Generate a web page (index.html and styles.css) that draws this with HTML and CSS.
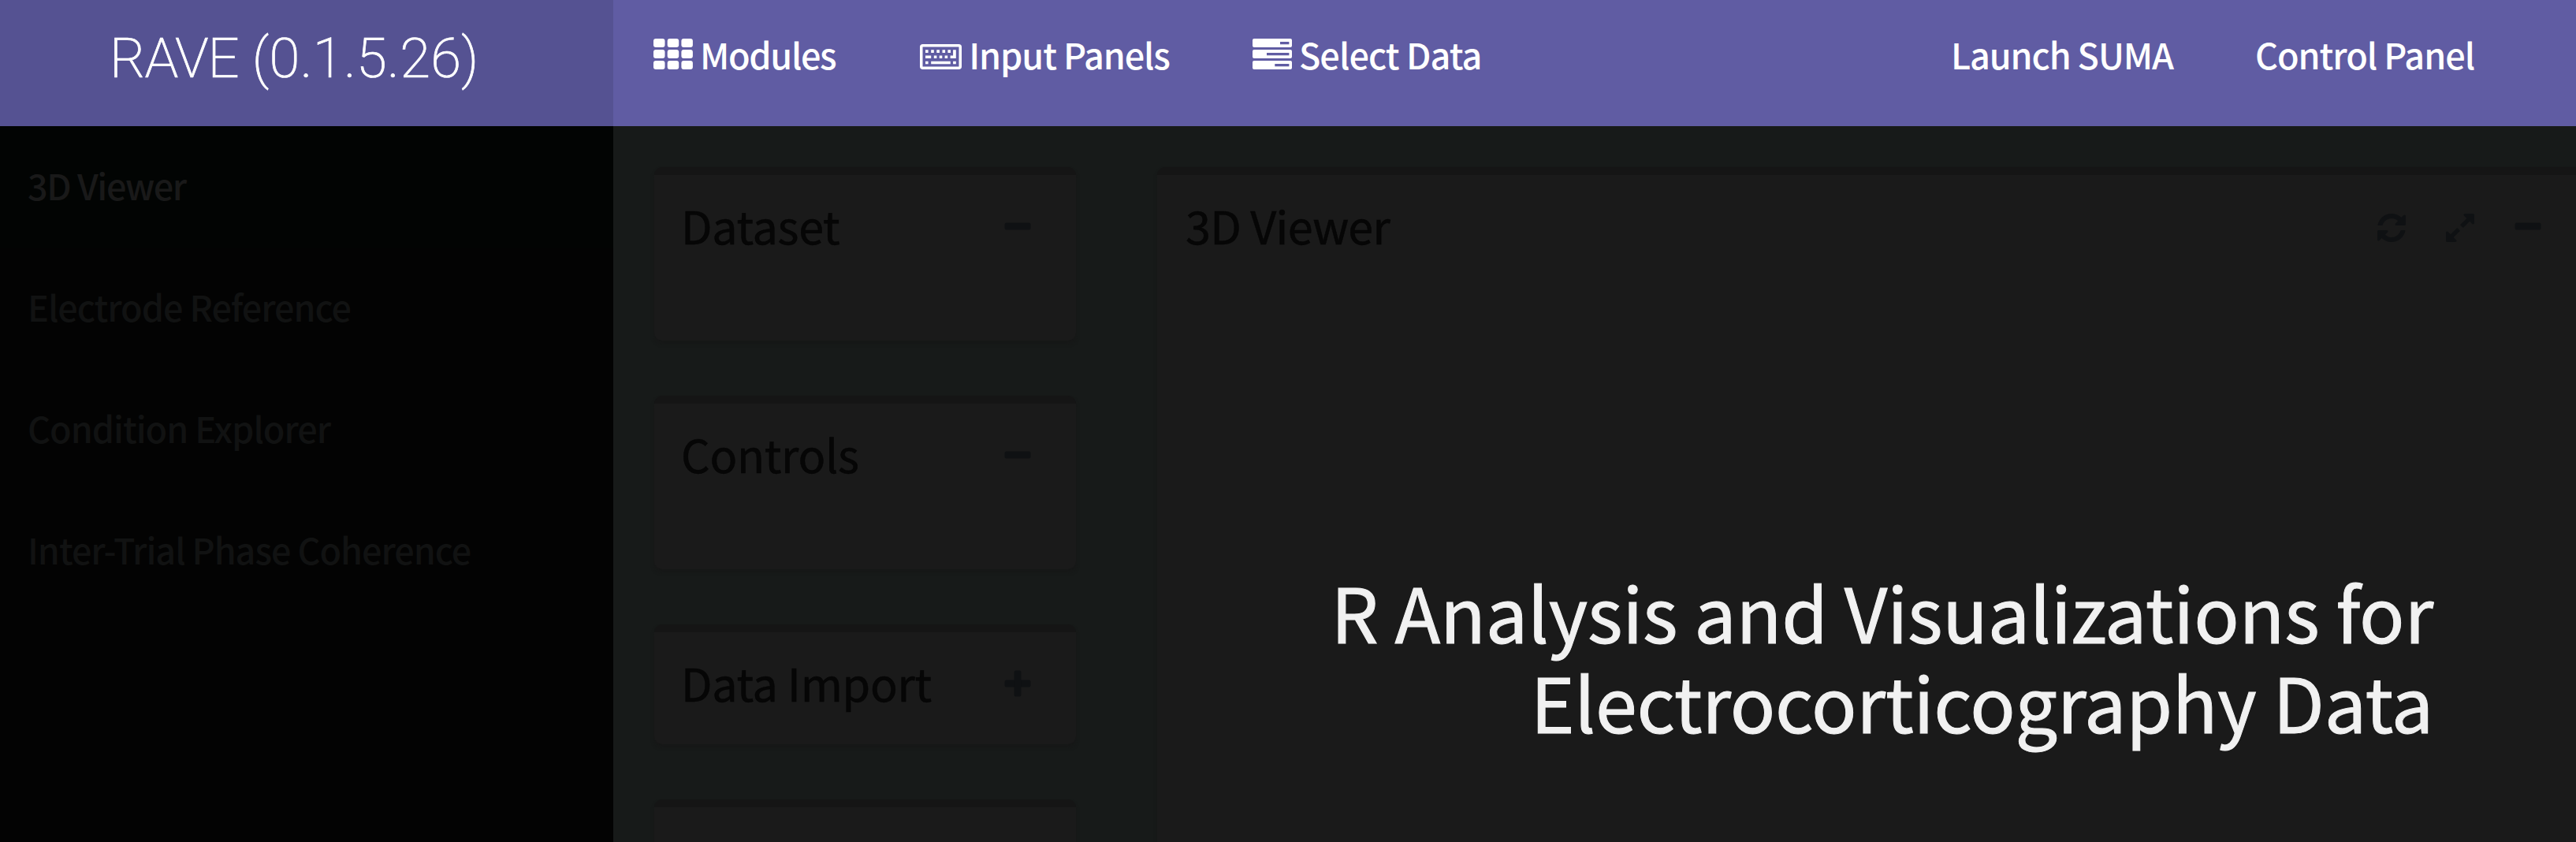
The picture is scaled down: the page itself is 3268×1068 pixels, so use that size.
FILE: index.html
```html
<!DOCTYPE html>
<html lang="en">
<head>
<meta charset="utf-8">
<title>RAVE</title>
<link rel="stylesheet" href="styles.css">
</head>
<body>
<header class="header">
  <div class="logo"><span class="logo-name">RAVE</span> (0.1.5.26)</div>
  <nav class="navbar">
    <a class="nav-link nav-modules">
      <svg class="nav-icon" width="50" height="39" viewBox="0 0 50 39" fill="#fff">
        <rect x="0" y="0" width="14.5" height="11" rx="3"/><rect x="17.7" y="0" width="14.5" height="11" rx="3"/><rect x="35.4" y="0" width="14.5" height="11" rx="3"/>
        <rect x="0" y="14" width="14.5" height="11" rx="3"/><rect x="17.7" y="14" width="14.5" height="11" rx="3"/><rect x="35.4" y="14" width="14.5" height="11" rx="3"/>
        <rect x="0" y="28" width="14.5" height="11" rx="3"/><rect x="17.7" y="28" width="14.5" height="11" rx="3"/><rect x="35.4" y="28" width="14.5" height="11" rx="3"/>
      </svg><span>Modules</span></a>
    <a class="nav-link nav-inputs">
      <svg class="nav-icon" width="53" height="32" viewBox="0 0 53 32" fill="#fff">
        <rect x="1.75" y="1.75" width="49.5" height="28.5" rx="2" fill="none" stroke="#fff" stroke-width="3.5"/>
        <path d="M7 7.3h3.6v3.6H7zM14.2 7.3h3.6v3.6h-3.6zM21.3 7.3h3.6v3.6h-3.6zM28.5 7.3h3.6v3.6h-3.6zM35.4 7.3H39v3.6h-3.6zM42.1 7.3h3.7v10.8h-7.2v-3.6h3.5zM7 14.5h7.2v3.6H7zM17.8 14.5h3.6v3.6h-3.6zM24.7 14.5h3.6v3.6h-3.6zM31.6 14.5h3.6v3.6h-3.6zM7 21.7h3.6v3.6H7zM14.2 21.7h24.6v3.6H14.2zM42.1 21.7h3.7v3.6h-3.7z"/>
      </svg><span>Input Panels</span></a>
    <a class="nav-link nav-data">
      <svg class="nav-icon" width="50" height="39" viewBox="0 0 50 39" fill="#fff" fill-rule="evenodd">
        <path d="M2 0h46q2 0 2 2v7q0 2-2 2H2q-2 0-2-2V2q0-2 2-2zM35 4v3.2h11.4V4z"/>
        <path d="M2 14h46q2 0 2 2v7q0 2-2 2H2q-2 0-2-2v-7q0-2 2-2zM18 18v3.2h28.4V18z"/>
        <path d="M2 28h46q2 0 2 2v7q0 2-2 2H2q-2 0-2-2v-7q0-2 2-2zM28.3 32v3.2h18.1V32z"/>
      </svg><span>Select Data</span></a>
    <a class="nav-link nav-suma">Launch SUMA</a>
    <a class="nav-link nav-control">Control Panel</a>
  </nav>
</header>
<div class="wrapper">
  <aside class="sidebar">
    <a class="menu-item active">3D Viewer</a>
    <a class="menu-item">Electrode Reference</a>
    <a class="menu-item">Condition Explorer</a>
    <a class="menu-item">Inter-Trial Phase Coherence</a>
  </aside>
  <main class="content">
    <div class="inputs">
      <section class="box"><div class="box-header"><h3>Dataset</h3><svg class="tool" width="34" height="34" viewBox="0 0 34 34"><rect x="0.5" y="12.5" width="33" height="9" rx="2.5"/></svg></div></section>
      <section class="box"><div class="box-header"><h3>Controls</h3><svg class="tool" width="34" height="34" viewBox="0 0 34 34"><rect x="0.5" y="12.5" width="33" height="9" rx="2.5"/></svg></div></section>
      <section class="box collapsed"><div class="box-header"><h3>Data Import</h3><svg class="tool" width="34" height="34" viewBox="0 0 34 34"><rect x="0.5" y="12.5" width="33" height="9" rx="2.5"/><rect x="12.5" y="0.5" width="9" height="33" rx="2.5"/></svg></div></section>
      <section class="box"></section>
    </div>
    <section class="box viewer">
      <div class="box-header"><h3>3D Viewer</h3>
        <div class="tools">
          <svg class="tool" width="36" height="36" viewBox="0 0 1536 1536"><path d="M1511 928q0 5-1 7-64 268-268 434.500t-478 166.500q-146 0-282.500-55t-243.500-157l-129 129q-19 19-45 19t-45-19-19-45v-448q0-26 19-45t45-19h448q26 0 45 19t19 45-19 45l-137 137q71 66 161 102t187 36q134 0 250-65t186-179q11-17 53-117 8-23 30-23h192q13 0 22.500 9.500t9.500 22.500zm25-800v448q0 26-19 45t-45 19h-448q-26 0-45-19t-19-45 19-45l138-138q-148-137-349-137-134 0-250 65t-186 179q-11 17-53 117-8 23-30 23h-199q-13 0-22.500-9.500t-9.500-22.500v-7q65-268 270-434.500t480-166.500q146 0 284 55.500t245 156.500l130-129q19-19 45-19t45 19 19 45z"/></svg>
          <svg class="tool" width="36" height="36" viewBox="0 0 1536 1536"><path d="M755 928q0 13-10 23l-332 332 144 144q19 19 19 45t-19 45-45 19h-448q-26 0-45-19t-19-45v-448q0-26 19-45t45-19 45 19l144 144 332-332q10-10 23-10t23 10l114 114q10 10 10 23zm781-864v448q0 26-19 45t-45 19-45-19l-144-144-332 332q-10 10-23 10t-23-10l-114-114q-10-10-10-23t10-23l332-332-144-144q-19-19-19-45t19-45 45-19h448q26 0 45 19t19 45z"/></svg>
          <svg class="tool" width="34" height="34" viewBox="0 0 34 34"><rect x="0.5" y="12.5" width="33" height="9" rx="2.5"/></svg>
        </div>
      </div>
    </section>
  </main>
</div>
<h1 class="splash">R Analysis and Visualizations for<br>Electrocorticography Data</h1>
</body>
</html>
```
FILE: styles.css
```css
* { box-sizing: border-box; }

body {
  margin: 0;
  height: 1068px;
  position: relative;
  overflow: hidden;
  background: #171a19;
  font-family: "Noto Sans CJK JP", "Noto Sans", sans-serif;
}

.header {
  display: flex;
  height: 160px;
  background: #605ca3;
}

.logo {
  width: 778px;
  padding-left: 139px;
  background: #555292;
  color: #fff;
  font: 200 70.5px/148px Roboto, sans-serif;
  letter-spacing: .3px;
  -webkit-text-stroke: .7px #fff;
  white-space: nowrap;
}

.logo-name { letter-spacing: -1.2px; }

.navbar {
  flex: 1;
  display: flex;
  padding: 0 129px 0 51px;
}

.nav-link {
  display: flex;
  color: #fff;
  font-size: 45px;
  font-weight: 500;
  line-height: 137px;
  letter-spacing: -1.1px;
  white-space: nowrap;
}

.nav-icon { margin-top: 49px; margin-right: 9px; }
.nav-inputs .nav-icon { margin-top: 56px; }
.nav-modules { letter-spacing: -1.35px; }
.nav-inputs { margin-left: 107px; }
.nav-data { margin-left: 105px; letter-spacing: -.9px; }
.nav-suma { margin-left: auto; margin-right: 104px; }
.nav-control { letter-spacing: -1.05px; }

.wrapper {
  display: flex;
  height: 908px;
}

.sidebar {
  width: 778px;
  background: #030303;
}

.menu-item {
  display: block;
  height: 154px;
  padding-left: 35px;
  color: #111212;
  font-size: 45px;
  font-weight: 500;
  line-height: 149px;
  letter-spacing: -1.05px;
}

.menu-item.active {
  background: #020403;
  color: #191919;
  letter-spacing: -1.4px;
}

.content {
  flex: 1;
  display: flex;
  gap: 103px;
  padding: 52px 0 0 52px;
  overflow: hidden;
}

.inputs {
  display: flex;
  flex-direction: column;
  gap: 70px;
  width: 535px;
}

.box {
  flex: none;
  height: 220px;
  border-top: 10px solid #151515;
  border-radius: 10px;
  background: #1a1a1a;
  box-shadow: 0 4px 4px rgba(21, 21, 21, .6);
}

.box.collapsed { height: 152px; }

.viewer {
  flex: 1;
  height: 900px;
  border-radius: 10px 0 0 0;
}

.box-header {
  display: flex;
  justify-content: space-between;
  padding: 0 57px 0 34px;
}

.viewer .box-header { padding-right: 44px; }

.box h3 {
  margin: 0;
  color: #060606;
  font-size: 57.5px;
  font-weight: 400;
  line-height: 126px;
  letter-spacing: -.3px;
  -webkit-text-stroke: .5px #060606;
  white-space: nowrap;
}

.viewer h3 { padding-left: 2px; letter-spacing: -.7px; }

.tools { display: flex; gap: 51px; }
.tool { margin-top: 48px; fill: #0f1113; }
.tools .tool { margin-top: 49px; }
.tools .tool:last-child { margin-top: 48px; }

.splash {
  position: absolute;
  top: 718px;
  right: 181px;
  margin: 0;
  color: #f1f1f1;
  font-size: 95px;
  font-weight: 400;
  line-height: 114px;
  letter-spacing: -.25px;
  -webkit-text-stroke: 1px #f1f1f1;
  text-align: right;
  white-space: nowrap;
}
```
